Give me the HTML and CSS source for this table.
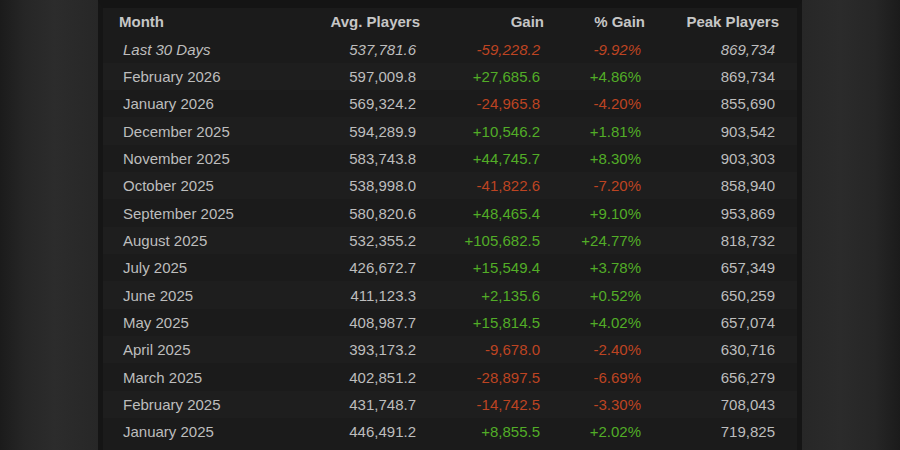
FILE: index.html
```html
<!DOCTYPE html>
<html>
<head>
<meta charset="utf-8">
<link rel="stylesheet" href="styles.css">
</head>
<body>
<div class="page">
  <div class="panel">
    <div class="row head">
      <div class="c month">Month</div>
      <div class="c">Avg. Players</div>
      <div class="c">Gain</div>
      <div class="c">% Gain</div>
      <div class="c">Peak Players</div>
    </div>
    <div class="row odd recent">
      <div class="c month">Last 30 Days</div>
      <div class="c">537,781.6</div>
      <div class="c neg">-59,228.2</div>
      <div class="c neg">-9.92%</div>
      <div class="c">869,734</div>
    </div>
    <div class="row even">
      <div class="c month">February 2026</div>
      <div class="c">597,009.8</div>
      <div class="c pos">+27,685.6</div>
      <div class="c pos">+4.86%</div>
      <div class="c">869,734</div>
    </div>
    <div class="row odd">
      <div class="c month">January 2026</div>
      <div class="c">569,324.2</div>
      <div class="c neg">-24,965.8</div>
      <div class="c neg">-4.20%</div>
      <div class="c">855,690</div>
    </div>
    <div class="row even">
      <div class="c month">December 2025</div>
      <div class="c">594,289.9</div>
      <div class="c pos">+10,546.2</div>
      <div class="c pos">+1.81%</div>
      <div class="c">903,542</div>
    </div>
    <div class="row odd">
      <div class="c month">November 2025</div>
      <div class="c">583,743.8</div>
      <div class="c pos">+44,745.7</div>
      <div class="c pos">+8.30%</div>
      <div class="c">903,303</div>
    </div>
    <div class="row even">
      <div class="c month">October 2025</div>
      <div class="c">538,998.0</div>
      <div class="c neg">-41,822.6</div>
      <div class="c neg">-7.20%</div>
      <div class="c">858,940</div>
    </div>
    <div class="row odd">
      <div class="c month">September 2025</div>
      <div class="c">580,820.6</div>
      <div class="c pos">+48,465.4</div>
      <div class="c pos">+9.10%</div>
      <div class="c">953,869</div>
    </div>
    <div class="row even">
      <div class="c month">August 2025</div>
      <div class="c">532,355.2</div>
      <div class="c pos">+105,682.5</div>
      <div class="c pos">+24.77%</div>
      <div class="c">818,732</div>
    </div>
    <div class="row odd">
      <div class="c month">July 2025</div>
      <div class="c">426,672.7</div>
      <div class="c pos">+15,549.4</div>
      <div class="c pos">+3.78%</div>
      <div class="c">657,349</div>
    </div>
    <div class="row even">
      <div class="c month">June 2025</div>
      <div class="c">411,123.3</div>
      <div class="c pos">+2,135.6</div>
      <div class="c pos">+0.52%</div>
      <div class="c">650,259</div>
    </div>
    <div class="row odd">
      <div class="c month">May 2025</div>
      <div class="c">408,987.7</div>
      <div class="c pos">+15,814.5</div>
      <div class="c pos">+4.02%</div>
      <div class="c">657,074</div>
    </div>
    <div class="row even">
      <div class="c month">April 2025</div>
      <div class="c">393,173.2</div>
      <div class="c neg">-9,678.0</div>
      <div class="c neg">-2.40%</div>
      <div class="c">630,716</div>
    </div>
    <div class="row odd">
      <div class="c month">March 2025</div>
      <div class="c">402,851.2</div>
      <div class="c neg">-28,897.5</div>
      <div class="c neg">-6.69%</div>
      <div class="c">656,279</div>
    </div>
    <div class="row even">
      <div class="c month">February 2025</div>
      <div class="c">431,748.7</div>
      <div class="c neg">-14,742.5</div>
      <div class="c neg">-3.30%</div>
      <div class="c">708,043</div>
    </div>
    <div class="row odd">
      <div class="c month">January 2025</div>
      <div class="c">446,491.2</div>
      <div class="c pos">+8,855.5</div>
      <div class="c pos">+2.02%</div>
      <div class="c">719,825</div>
    </div>
  </div>
</div>
</body>
</html>
```

FILE: styles.css
```css
html, body {
  margin: 0;
  padding: 0;
}
body {
  width: 900px;
  height: 450px;
  overflow: hidden;
  font-family: "Liberation Sans", Arial, sans-serif;
  font-size: 15px;
  background: linear-gradient(to right,
    #1b1b1b 0px,
    #262626 25px,
    #2c2c2c 55px,
    #272727 98px,
    #272727 802px,
    #2b2b2b 840px,
    #262626 875px,
    #1b1b1b 900px);
}
.page {
  padding-left: 98px;
}
.panel {
  width: 694px;
  height: 460px;
  background: #1b1b1b;
  border-left: 5px solid #151515;
  border-right: 5px solid #151515;
  border-top: 8px solid #141414;
}
.row {
  display: grid;
  grid-template-columns: 197px 120px 124px 101px 134px;
  height: 27.35px;
  align-items: center;
  color: #bdbdbd;
}
.row.odd {
  background: #1b1b1b;
}
.row.even {
  background: #1e1e1e;
}
.c {
  text-align: right;
  padding-right: 4px;
  white-space: nowrap;
}
.c.month {
  text-align: left;
  padding-left: 20px;
  padding-right: 0;
}
.head {
  background: #1b1b1b;
  color: #c6c6c6;
  font-weight: bold;
}
.head .c {
  padding-right: 0;
}
.head .c.month {
  padding-left: 16px;
}
.recent .c {
  font-style: italic;
}
.neg {
  color: #bd4422;
}
.pos {
  color: #52ad27;
}
```
